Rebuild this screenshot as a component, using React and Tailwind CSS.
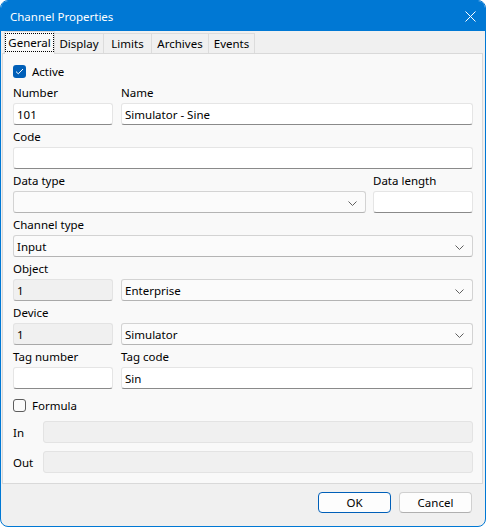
const font = { fontFamily: '"Noto Sans", "Liberation Sans", sans-serif' };

function Chevron() {
  return (
    <svg width="9" height="5" viewBox="0 0 9 5" className="absolute right-[8px] top-[9px]">
      <path d="M0.5 0.5 L4.5 4.5 L8.5 0.5" fill="none" stroke="#606060" strokeWidth="1" />
    </svg>
  );
}

function Input({ value, className = "" }) {
  return (
    <div className={`h-[22px] bg-white border border-[#e5e5e5] border-b-[#8a8a8a] rounded-[3px] flex items-center pl-[3px] pt-[1px] text-[11.5px] text-black ${className}`}>
      {value}
    </div>
  );
}

function Disabled({ value, className = "", dark = true }) {
  return (
    <div className={`h-[22px] bg-[#f0f0f0] border border-[#e3e3e3] rounded-[3px] flex items-center pl-[3px] pt-[1px] text-[11.5px] text-black ${dark ? "border-b-[#a8a8a8]" : ""} ${className}`}>
      {value}
    </div>
  );
}

function Select({ value, className = "" }) {
  return (
    <div className={`relative h-[22px] bg-[#fbfbfb] border border-[#d3d3d3] border-b-[#b4b4b4] rounded-[3px] flex items-center pl-[3px] pt-[1px] text-[11.5px] text-black ${className}`}>
      {value}
      <Chevron />
    </div>
  );
}

function Label({ children, className = "" }) {
  return <div className={`h-[22px] flex items-center pt-[1px] text-[11.5px] text-black ${className}`}>{children}</div>;
}

function Check({ checked, label, className = "" }) {
  return (
    <div className={`flex items-center gap-[6px] text-[11.5px] text-black ${className}`}>
      {checked ? (
        <div className="w-[13px] h-[13px] rounded-[3px] bg-[#005fb8] flex items-center justify-center">
          <svg width="9" height="7" viewBox="0 0 9 7">
            <path d="M1 3.6 L3.3 5.8 L8 1" fill="none" stroke="white" strokeWidth="1" />
          </svg>
        </div>
      ) : (
        <div className="w-[13px] h-[13px] rounded-[3px] border border-[#5d5d5d] bg-[#fbfbfb]" />
      )}
      <span className="pt-[1px]">{label}</span>
    </div>
  );
}

export default function App() {
  const tabs = ["Display", "Limits", "Archives", "Events"];
  const widths = ["w-[49px]", "w-[48px]", "w-[57px]", "w-[46px]"];
  return (
    <div style={font} className="w-[486px] h-[527px] bg-[#f0f0f0] border border-[#0078d4] rounded-[8px] overflow-hidden flex flex-col">
      <div className="h-[30px] bg-[#0078d4] flex items-center justify-between pl-[9px] pr-[9px] pt-[1px] text-white text-[11.5px]">
        <span>Channel Properties</span>
        <svg width="11" height="11" viewBox="0 0 11 11">
          <path d="M0.5 0.5 L10.5 10.5 M10.5 0.5 L0.5 10.5" stroke="white" strokeWidth="1" />
        </svg>
      </div>

      <div className="h-[22px] flex items-end pl-[3px] text-[11.5px] text-black">
        <div className="relative z-10 w-[51px] h-[23px] -mb-[1px] bg-[#f9f9f9] border border-b-0 border-[#d9d9d9] rounded-t-[2px] flex items-start justify-center pt-[1px]">
          <span className="border border-dotted border-black h-[19px] w-[49px] flex items-center justify-center">General</span>
        </div>
        {tabs.map((t, i) => (
          <div key={t} className={`${widths[i]} h-[20px] bg-[#f0f0f0] border-t border-r border-[#dcdcdc] flex items-center justify-center`}>
            {t}
          </div>
        ))}
      </div>

      <div className="ml-[1px] mr-[2px] h-[431px] bg-[#f9f9f9] border border-[#d9d9d9] pl-[10px] pr-[9px] pt-[8px] flex flex-col">
        <Check checked label="Active" className="h-[19px]" />

        <div className="flex gap-[8px]">
          <div className="w-[100px]">
            <Label>Number</Label>
            <Input value="101" />
          </div>
          <div className="flex-1">
            <Label>Name</Label>
            <Input value="Simulator - Sine" />
          </div>
        </div>

        <Label>Code</Label>
        <Input value="" />

        <div className="flex gap-[7px]">
          <div className="flex-1">
            <Label>Data type</Label>
            <Select value="" />
          </div>
          <div className="w-[100px]">
            <Label>Data length</Label>
            <Input value="" />
          </div>
        </div>

        <Label>Channel type</Label>
        <Select value="Input" />

        <Label>Object</Label>
        <div className="flex gap-[8px]">
          <Disabled value="1" className="w-[100px]" />
          <Select value="Enterprise" className="flex-1" />
        </div>

        <Label>Device</Label>
        <div className="flex gap-[8px]">
          <Disabled value="1" className="w-[100px]" />
          <Select value="Simulator" className="flex-1" />
        </div>

        <div className="flex gap-[8px]">
          <div className="w-[100px]">
            <Label>Tag number</Label>
            <Input value="" />
          </div>
          <div className="flex-1">
            <Label>Tag code</Label>
            <Input value="Sin" />
          </div>
        </div>

        <Check label="Formula" className="h-[22px] mt-[5px]" />

        <div className="flex items-center mt-[5px]">
          <span className="w-[30px] pt-[1px] text-[11.5px] text-black">In</span>
          <Disabled value="" dark={false} className="flex-1" />
        </div>
        <div className="flex items-center mt-[8px]">
          <span className="w-[30px] pt-[1px] text-[11.5px] text-black">Out</span>
          <Disabled value="" dark={false} className="flex-1" />
        </div>
      </div>

      <div className="flex justify-end gap-[8px] pt-[8px] pr-[13px]">
        <button className="w-[73px] h-[21px] bg-[#fdfdfd] border border-[#005fb8] rounded-[4px] text-[11.5px] text-black flex items-center justify-center">OK</button>
        <button className="w-[73px] h-[21px] bg-[#fdfdfd] border border-[#d0d0d0] border-b-[#b0b0b0] rounded-[4px] text-[11.5px] text-black flex items-center justify-center">Cancel</button>
      </div>
    </div>
  );
}
